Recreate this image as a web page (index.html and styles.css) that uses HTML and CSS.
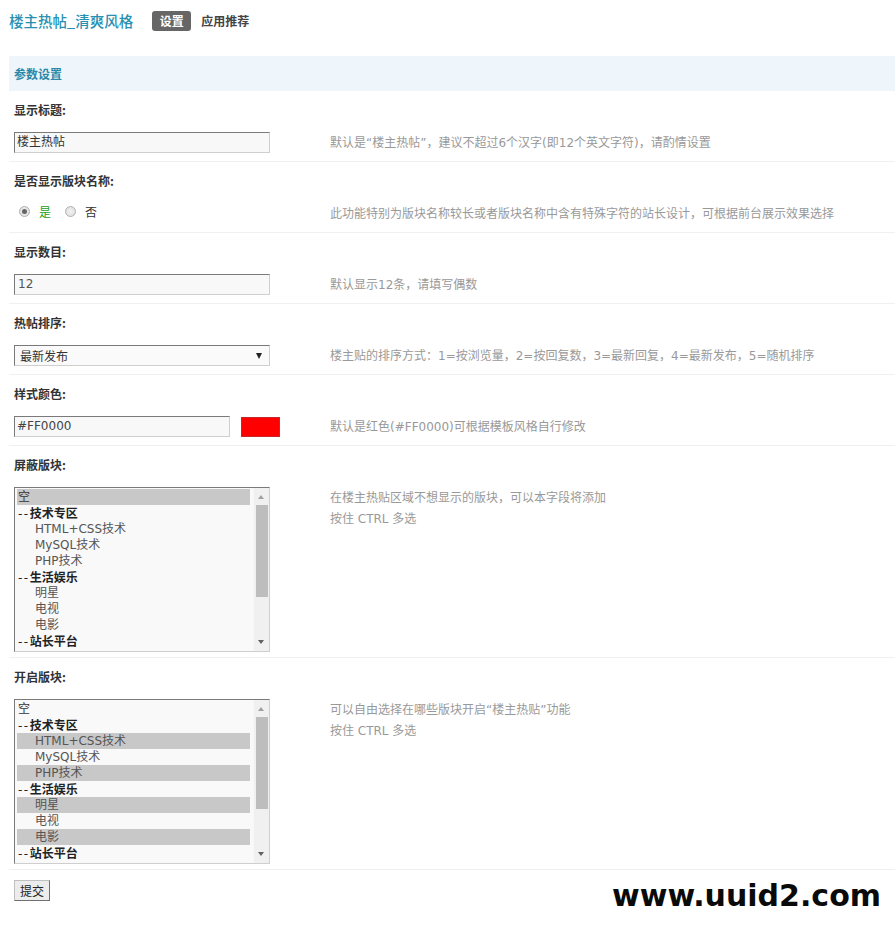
FILE: index.html
```html
<!DOCTYPE html>
<html lang="zh-CN">
<head>
<meta charset="utf-8">
<title>楼主热帖_清爽风格</title>
<link rel="stylesheet" href="styles.css">
</head>
<body>
<div class="page">
  <div class="topbar">
    <h1 class="title">楼主热帖_清爽风格</h1>
    <ul class="tabs">
      <li class="tab active">设置</li>
      <li class="tab">应用推荐</li>
    </ul>
  </div>

  <div class="section-head">参数设置</div>

  <div class="setting">
    <div class="label">显示标题:</div>
    <div class="row">
      <div class="control"><div class="txt">楼主热帖</div></div>
      <div class="tip">默认是“楼主热帖”，建议不超过6个汉字(即12个英文字符)，请酌情设置</div>
    </div>
  </div>

  <div class="setting">
    <div class="label">是否显示版块名称:</div>
    <div class="row">
      <div class="control radios">
        <span class="radio checked"></span><span class="radio-text yes">是</span>
        <span class="radio"></span><span class="radio-text">否</span>
      </div>
      <div class="tip">此功能特别为版块名称较长或者版块名称中含有特殊字符的站长设计，可根据前台展示效果选择</div>
    </div>
  </div>

  <div class="setting">
    <div class="label">显示数目:</div>
    <div class="row">
      <div class="control"><div class="txt num">12</div></div>
      <div class="tip">默认显示12条，请填写偶数</div>
    </div>
  </div>

  <div class="setting">
    <div class="label">热帖排序:</div>
    <div class="row">
      <div class="control"><div class="sel"><span>最新发布</span><span class="sel-arrow"></span></div></div>
      <div class="tip">楼主贴的排序方式：1=按浏览量，2=按回复数，3=最新回复，4=最新发布，5=随机排序</div>
    </div>
  </div>

  <div class="setting">
    <div class="label">样式颜色:</div>
    <div class="row">
      <div class="control color-ctl"><div class="txt short">#FF0000</div><span class="swatch"></span></div>
      <div class="tip">默认是红色(#FF0000)可根据模板风格自行修改</div>
    </div>
  </div>

  <div class="setting">
    <div class="label">屏蔽版块:</div>
    <div class="row tall">
      <div class="control">
        <div class="listbox">
          <div class="opts">
            <div class="opt on">空</div>
            <div class="opt grp"><span class="dash">--</span>技术专区</div>
            <div class="opt sub">HTML+CSS技术</div>
            <div class="opt sub">MySQL技术</div>
            <div class="opt sub">PHP技术</div>
            <div class="opt grp"><span class="dash">--</span>生活娱乐</div>
            <div class="opt sub">明星</div>
            <div class="opt sub">电视</div>
            <div class="opt sub">电影</div>
            <div class="opt grp"><span class="dash">--</span>站长平台</div>
          </div>
          <div class="sb">
            <span class="arrow up"></span>
            <span class="thumb"></span>
            <span class="fill"></span>
            <span class="arrow down"></span>
          </div>
        </div>
      </div>
      <div class="tip">在楼主热贴区域不想显示的版块，可以本字段将添加<br>按住 CTRL 多选</div>
    </div>
  </div>

  <div class="setting">
    <div class="label">开启版块:</div>
    <div class="row tall">
      <div class="control">
        <div class="listbox">
          <div class="opts">
            <div class="opt">空</div>
            <div class="opt grp"><span class="dash">--</span>技术专区</div>
            <div class="opt sub on">HTML+CSS技术</div>
            <div class="opt sub">MySQL技术</div>
            <div class="opt sub on">PHP技术</div>
            <div class="opt grp"><span class="dash">--</span>生活娱乐</div>
            <div class="opt sub on">明星</div>
            <div class="opt sub">电视</div>
            <div class="opt sub on">电影</div>
            <div class="opt grp"><span class="dash">--</span>站长平台</div>
          </div>
          <div class="sb">
            <span class="arrow up"></span>
            <span class="thumb"></span>
            <span class="fill"></span>
            <span class="arrow down"></span>
          </div>
        </div>
      </div>
      <div class="tip">可以自由选择在哪些版块开启“楼主热贴”功能<br>按住 CTRL 多选</div>
    </div>
  </div>

  <div class="submit-row"><button class="btn" type="button">提交</button></div>

  <div class="watermark">www.uuid2.com</div>
</div>
</body>
</html>
```

FILE: styles.css
```css
html, body {
  margin: 0;
  padding: 0;
  background: #fff;
}

body {
  font-family: "DejaVu Sans", "Noto Sans CJK SC", sans-serif;
  font-size: 12px;
  color: #333;
}

.page {
  position: relative;
  padding-left: 9px;
  min-height: 942px;
  box-sizing: border-box;
}

.topbar {
  display: flex;
  align-items: center;
  height: 42px;
}

.title {
  margin: 0;
  font-family: "Noto Sans CJK SC", sans-serif;
  font-size: 14.5px;
  font-weight: 500;
  color: #2990b2;
  line-height: 42px;
}

.tabs {
  display: flex;
  align-items: center;
  gap: 10px;
  list-style: none;
  margin: 0 0 0 19px;
  padding: 0;
}

.tab {
  font-family: "Noto Sans CJK SC", sans-serif;
  font-weight: bold;
  line-height: 20px;
  color: #444;
}

.tab.active {
  background: #666;
  color: #fff;
  border-radius: 3px;
  padding: 0 7.5px;
}

.section-head {
  margin-top: 14px;
  height: 35px;
  line-height: 35px;
  padding-left: 5px;
  background: #eef6fb;
  color: #2a88a8;
  font-family: "Noto Sans CJK SC", sans-serif;
  font-weight: bold;
}

.label {
  height: 41px;
  line-height: 38px;
  padding-left: 5px;
  font-family: "Noto Sans CJK SC", sans-serif;
  font-weight: bold;
  color: #333;
}

.row {
  display: flex;
  padding: 0 0 8px 5px;
  border-bottom: 1px solid #f0f0f0;
}

.row.tall {
  padding-bottom: 5px;
}

.control {
  width: 316px;
  flex: none;
}

.tip {
  color: #999;
  line-height: 21px;
  padding-top: 1px;
  margin-bottom: -1px;
}

.txt {
  width: 256px;
  height: 21px;
  box-sizing: border-box;
  border: 1px solid;
  border-color: #7a7a7a #cfcfcf #cfcfcf #7a7a7a;
  background: #f8f8f8;
  padding: 0 2px;
  line-height: 19px;
  color: #333;
}

.txt.num {
  color: #555;
  padding-left: 3px;
}

.txt.short {
  width: 216px;
  color: #444;
}

.radios {
  display: flex;
  align-items: center;
  height: 17px;
}

.radio {
  width: 11px;
  height: 11px;
  box-sizing: border-box;
  border-radius: 50%;
  border: 1px solid #b0b0b0;
  background: radial-gradient(circle, #f2f2f2 0, #dcdcdc 100%);
  flex: none;
  position: relative;
}

.radio:first-child {
  margin-left: 5px;
}

.radio.checked::after {
  content: "";
  position: absolute;
  left: 2px;
  top: 2px;
  width: 5px;
  height: 5px;
  border-radius: 50%;
  background: #666;
}

.radio-text {
  margin: 0 14px 0 9px;
  font-family: "Noto Sans CJK SC", sans-serif;
  color: #333;
  line-height: 17px;
}

.radio-text.yes {
  color: #22a022;
}

.sel {
  width: 256px;
  height: 21px;
  box-sizing: border-box;
  border: 1px solid;
  border-color: #7a7a7a #cfcfcf #cfcfcf #7a7a7a;
  background: #fafafa;
  display: flex;
  align-items: center;
  justify-content: space-between;
  padding: 0 7px 0 5px;
  color: #333;
}

.sel-arrow {
  width: 0;
  height: 0;
  border-left: 3px solid transparent;
  border-right: 3px solid transparent;
  border-top: 6px solid #222;
}

.color-ctl {
  display: flex;
  align-items: center;
}

.swatch {
  width: 39px;
  height: 20px;
  box-sizing: border-box;
  margin-left: 11px;
  background: #f00;
  border: 1px solid #c8282a;
}

.listbox {
  width: 256px;
  height: 165px;
  box-sizing: border-box;
  border: 1px solid;
  border-color: #7a7a7a #cfcfcf #cfcfcf #7a7a7a;
  background: #f9f9f9;
  display: flex;
}

.opts {
  flex: 1;
  padding: 1px 3px 1px 2px;
  overflow: hidden;
}

.opt {
  height: 16px;
  line-height: 16px;
  padding-left: 1px;
  white-space: nowrap;
  color: #333;
}

.opt.grp {
  font-weight: bold;
  font-family: "Noto Sans CJK SC", sans-serif;
  color: #222;
}

.dash {
  font-weight: normal;
  font-family: "DejaVu Sans", sans-serif;
  letter-spacing: 1.5px;
}

.opt.sub {
  padding-left: 18px;
  color: #555;
}

.opt.on {
  background: #c8c8c8;
}

.sb {
  width: 15px;
  flex: none;
  display: flex;
  flex-direction: column;
  align-items: center;
  background: #f0f0f0;
  border-left: 1px solid #f7f7f7;
}

.arrow {
  height: 17px;
  width: 15px;
  position: relative;
  flex: none;
}

.arrow::after {
  content: "";
  position: absolute;
  left: 4px;
  top: 7px;
  width: 0;
  height: 0;
  border-left: 3px solid transparent;
  border-right: 3px solid transparent;
}

.arrow.up::after {
  border-bottom: 4px solid #a0a0a0;
}

.arrow.down::after {
  top: 6px;
  border-top: 4px solid #606060;
}

.thumb {
  width: 12px;
  height: 92px;
  background: #bdbdbd;
  flex: none;
}

.fill {
  flex: 1;
}

.submit-row {
  padding: 10px 0 0 5px;
}

.btn {
  width: 36px;
  height: 21px;
  box-sizing: border-box;
  padding: 0;
  border: 1px solid;
  border-color: #c0c0c0 #707070 #707070 #c0c0c0;
  background: #ececec;
  font-family: "Noto Sans CJK SC", sans-serif;
  font-size: 12px;
  color: #222;
  line-height: 19px;
}

.watermark {
  position: absolute;
  left: 612px;
  top: 878px;
  font-family: "DejaVu Sans", sans-serif;
  font-weight: bold;
  font-size: 30px;
  color: #0a0a0a;
  line-height: normal;
}
```
